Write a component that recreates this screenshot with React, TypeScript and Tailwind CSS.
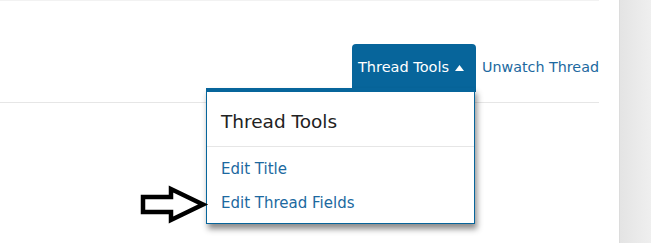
import React from "react";

const font = { fontFamily: "'DejaVu Sans', Verdana, sans-serif" };

const Arrow = () => (
  <svg width="70" height="40" viewBox="0 0 70 40" className="absolute left-[139px] top-[184px]">
    <path
      d="M4 13 H32 V5 L64 20.5 L32 36 V28 H4 Z"
      fill="none"
      stroke="#000"
      strokeWidth="4.5"
      strokeLinejoin="miter"
    />
  </svg>
);

export default function App() {
  return (
    <div className="flex h-[243px] w-[651px] bg-white" style={font}>
      {/* main column */}
      <div className="relative w-[619px] pr-[20px]">
        <div className="h-px w-full bg-[#f2f2f2]" />
        <div className="flex h-[101px] items-start justify-end pt-[43px]">
          <button className="flex h-[48px] w-[124px] items-start gap-[6px] rounded-t-[4px] bg-[#07659b] pl-[6px] pt-[13px] text-[14.5px] text-white">
            Thread Tools
            <svg width="9" height="6" viewBox="0 0 9 6" className="mt-[8px]">
              <path d="M0 6 L4.5 0 L9 6 Z" fill="#fff" />
            </svg>
          </button>
          <a className="ml-[6px] pt-[13px] text-[14.3px] text-[#1c69a0]">Unwatch Thread</a>
        </div>
        <div className="h-px w-full bg-[#e6e6e6]" />

        {/* dropdown */}
        <div className="absolute left-[206px] top-[88px] w-[269px] border border-t-4 border-[#07659b] border-t-[#07659b] bg-white shadow-[2px_5px_6px_rgba(0,0,0,0.45)]">
          <div className="px-[14px] pb-[12px] pt-[17px] text-[18.5px] leading-[25px] text-[#222]">Thread Tools</div>
          <div className="h-px bg-[#e6e6e6]" />
          <div className="flex flex-col gap-[14px] px-[14px] pb-[10px] pt-[12px] text-[15px] leading-[20px] text-[#1c69a0]">
            <a>Edit Title</a>
            <a>Edit Thread Fields</a>
          </div>
        </div>

        <Arrow />
      </div>

      {/* side panel */}
      <div className="w-[32px] border-l border-[#dcdcdc] bg-gradient-to-r from-[#e4e4e4] to-[#efefef]" />
    </div>
  );
}
